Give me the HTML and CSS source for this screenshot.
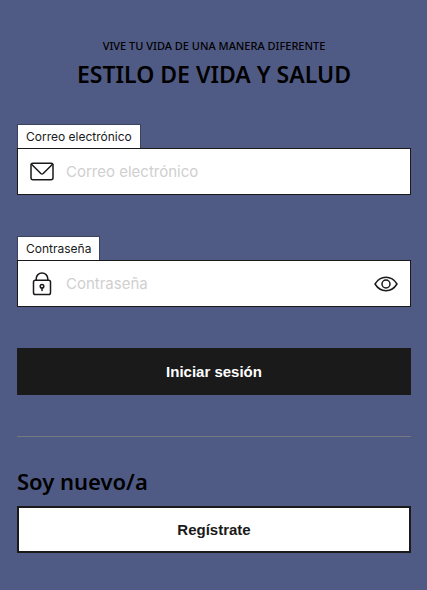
FILE: index.html
```html
<!DOCTYPE html>
<html lang="es">
<head>
<meta charset="utf-8">
<meta name="viewport" content="width=device-width, initial-scale=1">
<title>Iniciar sesión</title>
<link rel="stylesheet" href="styles.css">
</head>
<body>
<main class="page">
  <header class="intro">
    <p class="tagline">VIVE TU VIDA DE UNA MANERA DIFERENTE</p>
    <h1 class="title">ESTILO DE VIDA Y SALUD</h1>
  </header>
  <form class="login">
    <div class="field">
      <label class="field-label" for="email">Correo electrónico</label>
      <div class="field-box">
        <svg class="icon" viewBox="0 0 24 24" aria-hidden="true">
          <rect x="1" y="3.300" width="22" height="16.500" rx="2"/>
          <path d="M1.500 4.300l9.300 9.200q1.200 1.100 2.400 0L22.500 4.300"/>
        </svg>
        <input class="field-input" id="email" type="email" placeholder="Correo electrónico">
      </div>
    </div>
    <div class="field">
      <label class="field-label" for="password">Contraseña</label>
      <div class="field-box">
        <svg class="icon" viewBox="0 0 24 24" aria-hidden="true">
          <rect x="3.500" y="8.200" width="17" height="14.300" rx="1.800"/>
          <path d="M6.200 8V6.700a5.800 5.800 0 0 1 11.600 0V8"/>
          <circle cx="12" cy="14.200" r="1.800"/>
          <path d="M12 16v2.500"/>
        </svg>
        <input class="field-input" id="password" type="password" placeholder="Contraseña">
        <button class="reveal" type="button" aria-label="Mostrar contraseña">
          <svg class="icon" viewBox="0 0 24 24" aria-hidden="true">
            <path d="M1 12C3.500 8 7.500 5.300 12 5.300S20.500 8 23 12c-2.500 4-6.500 6.700-11 6.700S3.500 16 1 12z"/>
            <circle cx="12" cy="12" r="4"/>
          </svg>
        </button>
      </div>
    </div>
    <button class="button button-dark" type="submit">Iniciar sesión</button>
  </form>
  <section class="signup">
    <h2 class="subtitle">Soy nuevo/a</h2>
    <button class="button" type="button">Regístrate</button>
  </section>
</main>
</body>
</html>
```
FILE: styles.css
```css
* {
  box-sizing: border-box;
}

body {
  margin: 0;
  background: #505b85;
  color: #1a1a1a;
  font-family: Inter, "Liberation Sans", Arial, sans-serif;
}

.page {
  padding: 36px 16px 37px 17px;
}

.intro {
  margin-bottom: 32px;
  color: #000;
  font-family: "Noto Sans", sans-serif;
  text-align: center;
}

.tagline {
  margin: 0;
  font-size: 11px;
  font-weight: 500;
  line-height: 20px;
}

.title {
  margin: 0;
  font-size: 23px;
  font-weight: 600;
  line-height: 36px;
}

.login {
  display: flex;
  flex-direction: column;
  gap: 41px;
}

.field {
  display: flex;
  flex-direction: column;
  align-items: flex-start;
}

.field-label {
  padding: 0 8px;
  border: 1px solid #3c425c;
  border-bottom: 0;
  background: #fff;
  font-size: 12px;
  line-height: 23px;
}

.field-box {
  display: flex;
  align-items: center;
  gap: 12px;
  width: 100%;
  height: 47px;
  padding: 0 12px;
  border: 1px solid #1a1a1a;
  background: #fff;
}

.field-input {
  flex: 1;
  min-width: 0;
  height: 100%;
  padding: 0;
  border: 0;
  outline: 0;
  background: transparent;
  color: #1a1a1a;
  font-family: inherit;
  font-size: 15px;
}

.field-input::placeholder {
  color: #cfcfcf;
}

.icon {
  display: block;
  flex: none;
  width: 24px;
  height: 24px;
  fill: none;
  stroke: #1a1a1a;
  stroke-width: 1.500;
  stroke-linecap: round;
  stroke-linejoin: round;
}

.reveal {
  padding: 0;
  border: 0;
  background: transparent;
}

.button {
  width: 100%;
  height: 47px;
  padding: 0;
  border: 2px solid #1a1a1a;
  background: #fff;
  color: #1a1a1a;
  font: bold 15px "Liberation Sans", Arial, sans-serif;
}

.button-dark {
  background: #1a1a1a;
  color: #fff;
}

.signup {
  margin-top: 41px;
  padding-top: 28px;
  border-top: 1px solid #76777f;
}

.subtitle {
  margin: 0 0 9px;
  color: #000;
  font: 600 22px/32px "Noto Sans", sans-serif;
}
```
